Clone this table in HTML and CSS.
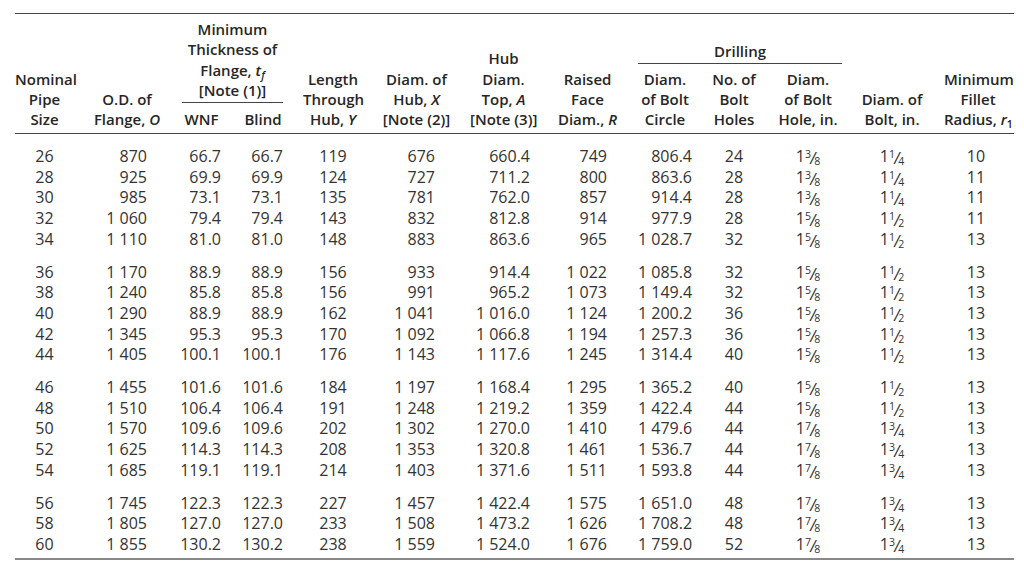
FILE: index.html
```html
<!DOCTYPE html>
<html lang="en">

<head>
  <meta charset="UTF-8">
  <meta name="viewport" content="width=device-width, initial-scale=1.0">
  <title>Flange Dimensions</title>
  <link rel="stylesheet" href="styles.css">
</head>

<body>
  <div class="page">
    <table class="flange-table">
      <colgroup>
        <col style="width: 59px">
        <col style="width: 106px">
        <col style="width: 43px">
        <col style="width: 80px">
        <col style="width: 60px">
        <col style="width: 107px">
        <col style="width: 67px">
        <col style="width: 101px">
        <col style="width: 54px">
        <col style="width: 84px">
        <col style="width: 64px">
        <col style="width: 104px">
        <col style="width: 70px">
      </colgroup>
      <thead>
        <tr>
          <th>Nominal<br>Pipe<br>Size</th>
          <th>O.D. of<br>Flange, <i>O</i></th>
          <th colspan="2">
            <div class="group-title thickness">Minimum<br>Thickness of<br>Flange, <i>t<sub>f</sub></i><br>[Note (1)]</div>
            <div class="group-subs thickness-subs">
              <span>WNF</span>
              <span>Blind</span>
            </div>
          </th>
          <th>Length<br>Through<br>Hub, <i>Y</i></th>
          <th>Diam. of<br>Hub, <i>X</i><br>[Note (2)]</th>
          <th>Hub<br>Diam.<br>Top, <i>A</i><br>[Note (3)]</th>
          <th>Raised<br>Face<br>Diam., <i>R</i></th>
          <th colspan="3">
            <div class="group-title drilling">Drilling</div>
            <div class="group-subs drilling-subs">
              <span>Diam.<br>of Bolt<br>Circle</span>
              <span>No. of<br>Bolt<br>Holes</span>
              <span>Diam.<br>of Bolt<br>Hole, in.</span>
            </div>
          </th>
          <th>Diam. of<br>Bolt, in.</th>
          <th class="last-head">Minimum<br>Fillet<br>Radius, <i>r</i><sub>1</sub></th>
        </tr>
      </thead>
      <tbody>
        <!-- group 1 -->
        <tr class="group-start first">
          <td>26</td><td>870</td><td>66.7</td><td>66.7</td><td>119</td><td>676</td><td>660.4</td><td>749</td><td>806.4</td><td>24</td>
          <td>1<span class="frac"><sup>3</sup><span class="slash">/</span><sub>8</sub></span></td><td>1<span class="frac"><sup>1</sup><span class="slash">/</span><sub>4</sub></span></td><td>10</td>
        </tr>
        <tr>
          <td>28</td><td>925</td><td>69.9</td><td>69.9</td><td>124</td><td>727</td><td>711.2</td><td>800</td><td>863.6</td><td>28</td>
          <td>1<span class="frac"><sup>3</sup><span class="slash">/</span><sub>8</sub></span></td><td>1<span class="frac"><sup>1</sup><span class="slash">/</span><sub>4</sub></span></td><td>11</td>
        </tr>
        <tr>
          <td>30</td><td>985</td><td>73.1</td><td>73.1</td><td>135</td><td>781</td><td>762.0</td><td>857</td><td>914.4</td><td>28</td>
          <td>1<span class="frac"><sup>3</sup><span class="slash">/</span><sub>8</sub></span></td><td>1<span class="frac"><sup>1</sup><span class="slash">/</span><sub>4</sub></span></td><td>11</td>
        </tr>
        <tr>
          <td>32</td><td>1 060</td><td>79.4</td><td>79.4</td><td>143</td><td>832</td><td>812.8</td><td>914</td><td>977.9</td><td>28</td>
          <td>1<span class="frac"><sup>5</sup><span class="slash">/</span><sub>8</sub></span></td><td>1<span class="frac"><sup>1</sup><span class="slash">/</span><sub>2</sub></span></td><td>11</td>
        </tr>
        <tr>
          <td>34</td><td>1 110</td><td>81.0</td><td>81.0</td><td>148</td><td>883</td><td>863.6</td><td>965</td><td>1 028.7</td><td>32</td>
          <td>1<span class="frac"><sup>5</sup><span class="slash">/</span><sub>8</sub></span></td><td>1<span class="frac"><sup>1</sup><span class="slash">/</span><sub>2</sub></span></td><td>13</td>
        </tr>
        <!-- group 2 -->
        <tr class="group-start">
          <td>36</td><td>1 170</td><td>88.9</td><td>88.9</td><td>156</td><td>933</td><td>914.4</td><td>1 022</td><td>1 085.8</td><td>32</td>
          <td>1<span class="frac"><sup>5</sup><span class="slash">/</span><sub>8</sub></span></td><td>1<span class="frac"><sup>1</sup><span class="slash">/</span><sub>2</sub></span></td><td>13</td>
        </tr>
        <tr>
          <td>38</td><td>1 240</td><td>85.8</td><td>85.8</td><td>156</td><td>991</td><td>965.2</td><td>1 073</td><td>1 149.4</td><td>32</td>
          <td>1<span class="frac"><sup>5</sup><span class="slash">/</span><sub>8</sub></span></td><td>1<span class="frac"><sup>1</sup><span class="slash">/</span><sub>2</sub></span></td><td>13</td>
        </tr>
        <tr>
          <td>40</td><td>1 290</td><td>88.9</td><td>88.9</td><td>162</td><td>1 041</td><td>1 016.0</td><td>1 124</td><td>1 200.2</td><td>36</td>
          <td>1<span class="frac"><sup>5</sup><span class="slash">/</span><sub>8</sub></span></td><td>1<span class="frac"><sup>1</sup><span class="slash">/</span><sub>2</sub></span></td><td>13</td>
        </tr>
        <tr>
          <td>42</td><td>1 345</td><td>95.3</td><td>95.3</td><td>170</td><td>1 092</td><td>1 066.8</td><td>1 194</td><td>1 257.3</td><td>36</td>
          <td>1<span class="frac"><sup>5</sup><span class="slash">/</span><sub>8</sub></span></td><td>1<span class="frac"><sup>1</sup><span class="slash">/</span><sub>2</sub></span></td><td>13</td>
        </tr>
        <tr>
          <td>44</td><td>1 405</td><td>100.1</td><td>100.1</td><td>176</td><td>1 143</td><td>1 117.6</td><td>1 245</td><td>1 314.4</td><td>40</td>
          <td>1<span class="frac"><sup>5</sup><span class="slash">/</span><sub>8</sub></span></td><td>1<span class="frac"><sup>1</sup><span class="slash">/</span><sub>2</sub></span></td><td>13</td>
        </tr>
        <!-- group 3 -->
        <tr class="group-start">
          <td>46</td><td>1 455</td><td>101.6</td><td>101.6</td><td>184</td><td>1 197</td><td>1 168.4</td><td>1 295</td><td>1 365.2</td><td>40</td>
          <td>1<span class="frac"><sup>5</sup><span class="slash">/</span><sub>8</sub></span></td><td>1<span class="frac"><sup>1</sup><span class="slash">/</span><sub>2</sub></span></td><td>13</td>
        </tr>
        <tr>
          <td>48</td><td>1 510</td><td>106.4</td><td>106.4</td><td>191</td><td>1 248</td><td>1 219.2</td><td>1 359</td><td>1 422.4</td><td>44</td>
          <td>1<span class="frac"><sup>5</sup><span class="slash">/</span><sub>8</sub></span></td><td>1<span class="frac"><sup>1</sup><span class="slash">/</span><sub>2</sub></span></td><td>13</td>
        </tr>
        <tr>
          <td>50</td><td>1 570</td><td>109.6</td><td>109.6</td><td>202</td><td>1 302</td><td>1 270.0</td><td>1 410</td><td>1 479.6</td><td>44</td>
          <td>1<span class="frac"><sup>7</sup><span class="slash">/</span><sub>8</sub></span></td><td>1<span class="frac"><sup>3</sup><span class="slash">/</span><sub>4</sub></span></td><td>13</td>
        </tr>
        <tr>
          <td>52</td><td>1 625</td><td>114.3</td><td>114.3</td><td>208</td><td>1 353</td><td>1 320.8</td><td>1 461</td><td>1 536.7</td><td>44</td>
          <td>1<span class="frac"><sup>7</sup><span class="slash">/</span><sub>8</sub></span></td><td>1<span class="frac"><sup>3</sup><span class="slash">/</span><sub>4</sub></span></td><td>13</td>
        </tr>
        <tr>
          <td>54</td><td>1 685</td><td>119.1</td><td>119.1</td><td>214</td><td>1 403</td><td>1 371.6</td><td>1 511</td><td>1 593.8</td><td>44</td>
          <td>1<span class="frac"><sup>7</sup><span class="slash">/</span><sub>8</sub></span></td><td>1<span class="frac"><sup>3</sup><span class="slash">/</span><sub>4</sub></span></td><td>13</td>
        </tr>
        <!-- group 4 -->
        <tr class="group-start">
          <td>56</td><td>1 745</td><td>122.3</td><td>122.3</td><td>227</td><td>1 457</td><td>1 422.4</td><td>1 575</td><td>1 651.0</td><td>48</td>
          <td>1<span class="frac"><sup>7</sup><span class="slash">/</span><sub>8</sub></span></td><td>1<span class="frac"><sup>3</sup><span class="slash">/</span><sub>4</sub></span></td><td>13</td>
        </tr>
        <tr>
          <td>58</td><td>1 805</td><td>127.0</td><td>127.0</td><td>233</td><td>1 508</td><td>1 473.2</td><td>1 626</td><td>1 708.2</td><td>48</td>
          <td>1<span class="frac"><sup>7</sup><span class="slash">/</span><sub>8</sub></span></td><td>1<span class="frac"><sup>3</sup><span class="slash">/</span><sub>4</sub></span></td><td>13</td>
        </tr>
        <tr class="last">
          <td>60</td><td>1 855</td><td>130.2</td><td>130.2</td><td>238</td><td>1 559</td><td>1 524.0</td><td>1 676</td><td>1 759.0</td><td>52</td>
          <td>1<span class="frac"><sup>7</sup><span class="slash">/</span><sub>8</sub></span></td><td>1<span class="frac"><sup>3</sup><span class="slash">/</span><sub>4</sub></span></td><td>13</td>
        </tr>
      </tbody>
    </table>
  </div>
</body>

</html>
```

FILE: styles.css
```css
body {
  margin: 0;
  background-color: #fff;
  color: #333;
  font-family: "Open Sans", "Noto Sans", sans-serif;
}

.page {
  padding: 13px 10px 0 15px;
}

.flange-table {
  width: 999px;
  table-layout: fixed;
  border-collapse: collapse;
}

/* Header */
.flange-table th {
  padding: 5px 0 4px;
  font-size: 15px;
  font-weight: 600;
  line-height: 20.3px;
  color: #262626;
  text-align: center;
  vertical-align: bottom;
  white-space: nowrap;
  border-top: 1.5px solid #444;
  border-bottom: 1.5px solid #444;
}

.flange-table th.last-head {
  padding-right: 2px;
}

.flange-table i {
  font-style: italic;
}

.flange-table sub {
  font-size: 0.7em;
  line-height: 0;
  vertical-align: -0.3em;
}

.group-title {
  border-bottom: 1px solid #444;
}

.group-title.thickness {
  margin: 0 20px 0 2px;
  padding-bottom: 2px;
}

.group-title.drilling {
  margin-right: -2px;
  padding-bottom: 1px;
}

.group-subs {
  display: grid;
}

.thickness-subs {
  grid-template-columns: 43px 80px;
  margin-top: 6px;
}

.drilling-subs {
  grid-template-columns: 54px 84px 64px;
  margin-top: 5px;
}

/* Body */
.flange-table td {
  padding: 0;
  font-size: 16px;
  line-height: 20.7px;
  white-space: nowrap;
  text-align: right;
}

.flange-table tr.group-start td {
  padding-top: 12px;
}

.flange-table tr.first td {
  padding-top: 11.5px;
}

.flange-table tr.last td {
  padding-bottom: 3.5px;
  border-bottom: 2px solid #888;
}

.flange-table td:nth-child(1),
.flange-table td:nth-child(5),
.flange-table td:nth-child(10),
.flange-table td:nth-child(11),
.flange-table td:nth-child(12),
.flange-table td:nth-child(13) {
  text-align: center;
}

.flange-table td:nth-child(2) { padding-right: 33px; }
.flange-table td:nth-child(3) { padding-right: 2px; }
.flange-table td:nth-child(4) { padding-right: 20px; }
.flange-table td:nth-child(6) { padding-right: 35px; }
.flange-table td:nth-child(7) { padding-right: 7px; }
.flange-table td:nth-child(8) { padding-right: 31px; }
.flange-table td:nth-child(13) { padding-right: 6px; }

/* Fractions like 1 3/8 */
.frac sup,
.frac sub {
  font-size: 0.66em;
  line-height: 0;
}

.frac sup {
  vertical-align: 0.4em;
}

.frac sub {
  vertical-align: -0.28em;
}

.frac .slash {
  display: inline-block;
  margin: 0 -1.5px;
  font-size: 1.05em;
  line-height: 0;
  vertical-align: -0.12em;
  transform: skewX(-8deg);
}
```
